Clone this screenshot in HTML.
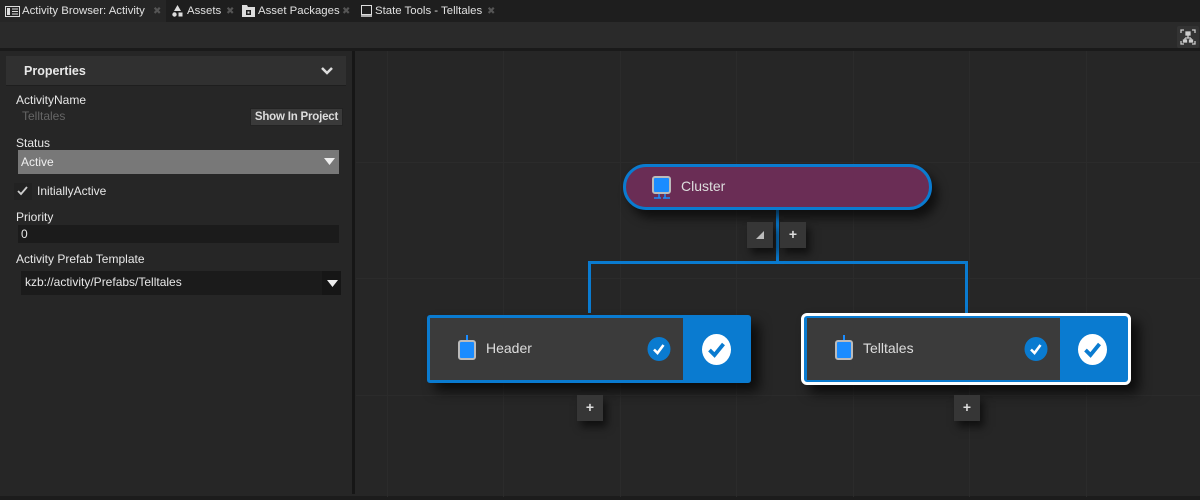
<!DOCTYPE html>
<html><head><style>
*{margin:0;padding:0;box-sizing:border-box}
body{width:1200px;height:500px;background:#262626;font-family:"Segoe UI","Liberation Sans",sans-serif;font-size:12px;color:#ddd;position:relative;overflow:hidden}
.a{position:absolute}
.tab{position:absolute;top:0;height:22px;line-height:22px;font-size:11.4px;color:#e0e0e0;white-space:nowrap}
.x{position:absolute;top:0;height:22px;line-height:23px;color:#555;font-size:10px}
.lbl{position:absolute;font-size:12px;color:#e8e8e8}
.gv{position:absolute;top:51px;bottom:3px;width:1px;background:#2b2b2b}
.gh{position:absolute;left:356px;right:0;height:1px;background:#2b2b2b}
.btn{position:absolute;width:26px;height:26px;background:#363636;box-shadow:4px 6px 8px rgba(0,0,0,.6);color:#ddd;text-align:center;line-height:25px;font-weight:bold;font-size:14px}
.ln{position:absolute;background:#0a7bd0}
svg{position:absolute}
</style></head><body>
<div class="a" style="left:0;top:0;width:1200px;height:22px;background:#1e1e1e"></div>
<div class="a" style="left:0;top:0;width:166px;height:22px;background:#262626"></div>
<svg style="left:5px;top:6px" width="15" height="11"><rect x="0.5" y="0.5" width="14" height="10" fill="none" stroke="#ddd"/><rect x="2" y="2" width="3" height="7" fill="#ddd"/><path d="M7 3h6M7 5.5h6M7 8h6" stroke="#ddd"/></svg>
<div class="tab" style="left:22px">Activity Browser: Activity</div><div class="x" style="left:153px">✖</div>
<svg style="left:172px;top:5px" width="11" height="12"><path d="M5.5 0L9 6H2z" fill="#ddd"/><circle cx="2.5" cy="9.5" r="2.2" fill="#ddd"/><rect x="6.5" y="7.5" width="4" height="4" fill="#ddd"/></svg>
<div class="tab" style="left:187px">Assets</div><div class="x" style="left:226px">✖</div>
<svg style="left:242px;top:4px" width="13" height="13"><path d="M0 1h5l1 2h7v10H0z" fill="#ddd"/><rect x="4" y="6" width="5" height="5" fill="#1e1e1e"/><rect x="5.5" y="7.5" width="2" height="2" fill="#ddd"/></svg>
<div class="tab" style="left:258px">Asset Packages</div><div class="x" style="left:342px">✖</div>
<svg style="left:361px;top:5px" width="11" height="12"><rect x="0.5" y="0.5" width="10" height="9" fill="none" stroke="#ddd"/><path d="M0 11h11" stroke="#ddd" stroke-width="1.5"/></svg>
<div class="tab" style="left:375px">State Tools - Telltales</div><div class="x" style="left:487px">✖</div>
<div class="a" style="left:0;top:22px;width:1200px;height:27px;background:#2a2a2a"></div>
<div class="a" style="left:0;top:48px;width:1200px;height:3px;background:#1a1a1a"></div>
<div class="a" style="left:1177px;top:26px;width:22px;height:22px;background:#333;border-radius:2px"></div>
<svg style="left:1177px;top:26px" width="22" height="22" viewBox="0 0 22 22" fill="none" stroke="#ccc" stroke-width="1.3"><path d="M4 7V4h3M15 4h3v3M18 15v3h-3M7 18H4v-3"/><rect x="9" y="6" width="4" height="3" fill="#ccc"/><path d="M11 9v3M8 12h6M8 12v2M14 12v2"/><rect x="6.5" y="14" width="3" height="2" fill="#ccc"/><rect x="12.5" y="14" width="3" height="2" fill="#ccc"/></svg>

<div class="a" style="left:6px;top:56px;width:340px;height:30px;background:#303030;border-bottom:1px solid #1e1e1e"></div>
<div class="lbl" style="left:24px;top:64px;font-weight:bold;font-size:12.5px">Properties</div>
<svg style="left:321px;top:67px" width="12" height="8" viewBox="0 0 12 8"><path d="M1 1l5 5 5-5" stroke="#ddd" stroke-width="2.5" fill="none"/></svg>
<div class="lbl" style="left:16px;top:93px">ActivityName</div>
<div class="lbl" style="left:22px;top:109px;color:#666">Telltales</div>
<div class="a" style="left:250px;top:108px;width:93px;height:18px;background:#3a3a3a;border:1px solid #222;font-weight:bold;color:#ddd;font-size:11.5px;line-height:16px;text-align:center;letter-spacing:-0.2px">Show In Project</div>
<div class="lbl" style="left:16px;top:136px">Status</div>
<div class="a" style="left:18px;top:150px;width:321px;height:24px;background:#787878"></div>
<div class="lbl" style="left:21px;top:155px;color:#f0f0f0">Active</div>
<svg style="left:324px;top:158px" width="11" height="7"><path d="M0 0h11L5.5 7z" fill="#eee"/></svg>
<div class="a" style="left:14px;top:183px;width:18px;height:17px;background:#222"></div>
<svg style="left:16px;top:185px" width="13" height="12"><path d="M2 6l3 3 6-7" stroke="#ccc" stroke-width="1.8" fill="none"/></svg>
<div class="lbl" style="left:37px;top:184px">InitiallyActive</div>
<div class="lbl" style="left:16px;top:210px">Priority</div>
<div class="a" style="left:18px;top:225px;width:321px;height:18px;background:#1b1b1b"></div>
<div class="lbl" style="left:21px;top:227px">0</div>
<div class="lbl" style="left:16px;top:252px">Activity Prefab Template</div>
<div class="a" style="left:21px;top:271px;width:320px;height:24px;background:#1b1b1b"></div>
<div class="a" style="left:322px;top:271px;width:19px;height:24px;background:#161616"></div>
<div class="lbl" style="left:25px;top:275px">kzb://activity/Prefabs/Telltales</div>
<svg style="left:327px;top:280px" width="11" height="7"><path d="M0 0h11L5.5 7z" fill="#eee"/></svg>
<div class="a" style="left:352px;top:51px;width:3px;height:443px;background:#161616"></div>
<div class="a" style="left:0;top:496px;width:1200px;height:4px;background:#1c1c1c"></div>

<div class="gv" style="left:387px"></div><div class="gv" style="left:503px"></div><div class="gv" style="left:620px"></div><div class="gv" style="left:736px"></div><div class="gv" style="left:853px"></div><div class="gv" style="left:969px"></div><div class="gv" style="left:1086px"></div>
<div class="gh" style="top:162px"></div><div class="gh" style="top:278px"></div><div class="gh" style="top:395px"></div>

<div class="ln" style="left:776px;top:210px;width:3px;height:54px"></div>
<div class="ln" style="left:588px;top:261px;width:380px;height:3px"></div>
<div class="ln" style="left:588px;top:261px;width:3px;height:52px"></div>
<div class="ln" style="left:965px;top:261px;width:3px;height:52px"></div>

<div class="a" style="left:623px;top:164px;width:309px;height:46px;background:#6a2d55;border:3px solid #0a7bd0;border-radius:23px;box-shadow:6px 8px 10px rgba(0,0,0,.6)"></div>
<div class="a" style="left:652px;top:176px;width:19px;height:18px;background:#1a8cff;border:2px solid #bbb;border-radius:3px"></div>
<svg style="left:653px;top:194px" width="18" height="5"><path d="M1 4h7M10 4h7M6 0v4M12 0v4" stroke="#1a8cff" stroke-width="1.5" fill="none"/></svg>
<div class="lbl" style="left:681px;top:178px;font-size:14px;color:#ddd">Cluster</div>
<div class="btn" style="left:747px;top:222px"></div>
<svg style="left:756px;top:231px" width="8" height="8"><path d="M8 0v8H0z" fill="#bbb"/></svg>
<div class="btn" style="left:780px;top:222px">+</div>

<div class="a" style="left:427px;top:315px;width:324px;height:68px;background:#0a7bd0;border-radius:3px;box-shadow:8px 8px 12px rgba(0,0,0,.7)"></div>
<div class="a" style="left:430px;top:318px;width:253px;height:62px;background:#3b3b3b"></div>
<div class="a" style="left:458px;top:340px;width:18px;height:20px;background:#1a8cff;border:2px solid #bbb;border-radius:3px"></div>
<div class="a" style="left:466px;top:335px;width:2px;height:5px;background:#1a8cff"></div>
<div class="lbl" style="left:486px;top:340px;font-size:14px;color:#ddd">Header</div>
<svg style="left:647px;top:337px" width="24" height="24"><ellipse cx="12" cy="12" rx="11.5" ry="12" fill="#0a7bd0"/><path d="M7 12.5l3.5 3.5 6-8" stroke="#fff" stroke-width="2.6" fill="none"/></svg>
<svg style="left:701px;top:334px" width="31" height="31"><ellipse cx="15.5" cy="15.5" rx="14.5" ry="15.5" fill="#fff"/><path d="M8.5 16l5 5 9-11" stroke="#0a7bd0" stroke-width="3.8" fill="none"/></svg>

<div class="a" style="left:801px;top:313px;width:330px;height:72px;background:#0a7bd0;border:3px solid #fff;border-radius:6px;box-shadow:8px 8px 12px rgba(0,0,0,.7)"></div>
<div class="a" style="left:807px;top:318px;width:253px;height:62px;background:#3b3b3b"></div>
<div class="a" style="left:835px;top:340px;width:18px;height:20px;background:#1a8cff;border:2px solid #bbb;border-radius:3px"></div>
<div class="a" style="left:843px;top:335px;width:2px;height:5px;background:#1a8cff"></div>
<div class="lbl" style="left:863px;top:340px;font-size:14px;color:#ddd">Telltales</div>
<svg style="left:1024px;top:337px" width="24" height="24"><ellipse cx="12" cy="12" rx="11.5" ry="12" fill="#0a7bd0"/><path d="M7 12.5l3.5 3.5 6-8" stroke="#fff" stroke-width="2.6" fill="none"/></svg>
<svg style="left:1077px;top:334px" width="31" height="31"><ellipse cx="15.5" cy="15.5" rx="14.5" ry="15.5" fill="#fff"/><path d="M8.5 16l5 5 9-11" stroke="#0a7bd0" stroke-width="3.8" fill="none"/></svg>

<div class="btn" style="left:577px;top:395px">+</div>
<div class="btn" style="left:954px;top:395px">+</div>
</body></html>
